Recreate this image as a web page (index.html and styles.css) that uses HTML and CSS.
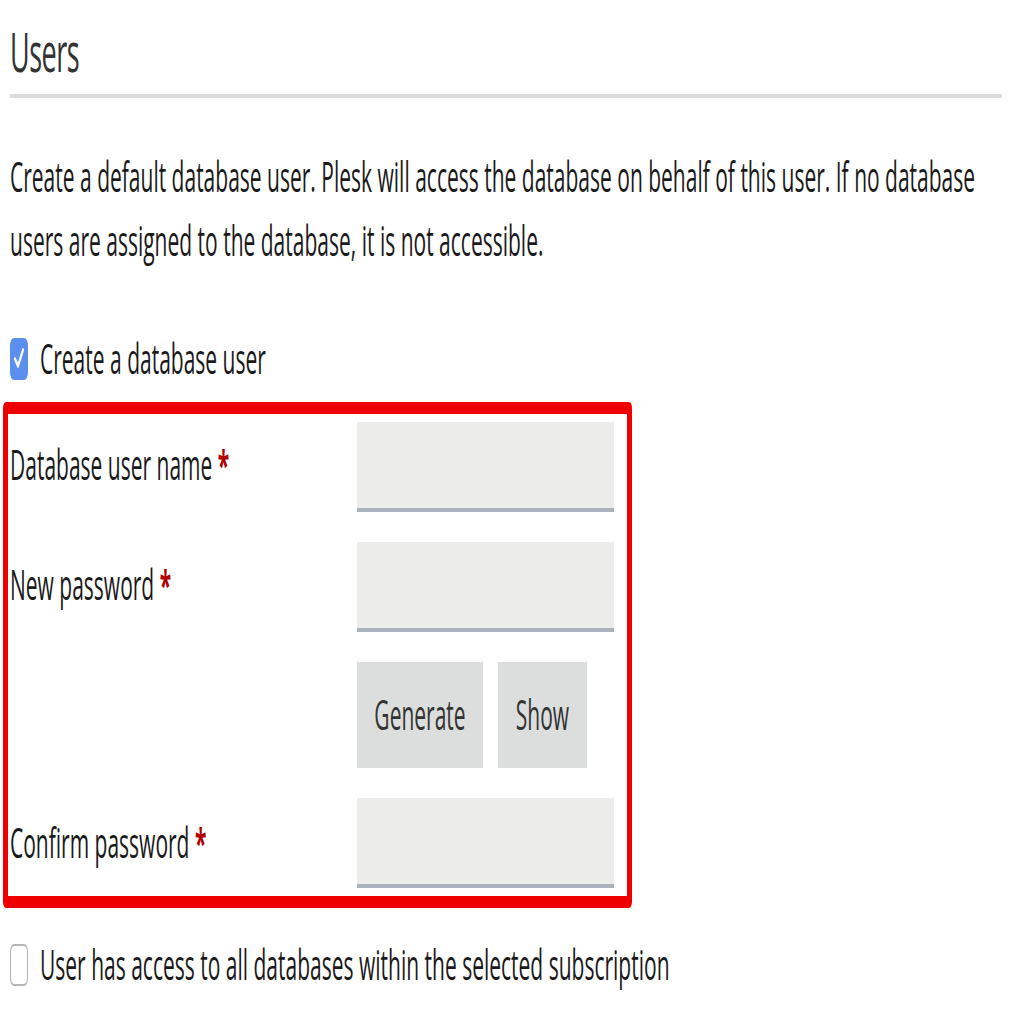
FILE: index.html
```html
<!DOCTYPE html>
<html lang="en">
<head>
<meta charset="utf-8">
<title>Users</title>
<link rel="stylesheet" href="styles.css">
</head>
<body>
<div class="page">
  <h1 class="title">Users</h1>
  <div class="rule"></div>
  <p class="desc">Create a default database user. Plesk will access the database on behalf of this user. If no database users are assigned to the database, it is not accessible.</p>
  <label class="check-row">
    <span class="box checked"><svg viewBox="0 0 18 20" width="18" height="20"><path d="M5 10.5 L8 14 L13 6" fill="none" stroke="#fff" stroke-width="2" stroke-linecap="round" stroke-linejoin="round"/></svg></span>
    <span class="check-text">Create a database user</span>
  </label>
  <div class="highlight">
    <div class="form-row">
      <span class="label">Database user name <span class="req">*</span></span>
      <span class="field"></span>
    </div>
    <div class="form-row">
      <span class="label">New password <span class="req">*</span></span>
      <span class="field"></span>
    </div>
    <div class="form-row buttons-row">
      <span class="label"></span>
      <span class="buttons"><span class="btn btn-gen">Generate</span><span class="btn btn-show">Show</span></span>
    </div>
    <div class="form-row">
      <span class="label">Confirm password <span class="req">*</span></span>
      <span class="field"></span>
    </div>
  </div>
  <label class="check-row last">
    <span class="box"></span>
    <span class="check-text">User has access to all databases within the selected subscription</span>
  </label>
</div>
</body>
</html>
```
FILE: styles.css
```css
html, body {
  margin: 0;
  padding: 0;
  background: #ffffff;
}
body {
  font-family: "Open Sans", "Noto Sans", sans-serif;
  color: #1a1a1a;
  min-height: 1024px;
}
.page {
  width: 1024px;
  height: 512px;
  box-sizing: border-box;
  padding: 0 22px 0 10px;
  transform: scale(1, 2);
  transform-origin: 0 0;
}
.title {
  margin: 0;
  padding-top: 9px;
  font-size: 27px;
  line-height: 34px;
  font-weight: 400;
  color: #333333;
  letter-spacing: -0.5px;
}
.rule {
  height: 2px;
  background: #dcdcdc;
  margin-top: 4px;
}
.desc {
  margin: 24px 0 0 0;
  font-size: 21px;
  line-height: 31.5px;
}
.check-row {
  display: flex;
  align-items: center;
  gap: 12px;
  margin-top: 28px;
  font-size: 21px;
  line-height: 31.5px;
}
.check-row.last {
  margin-top: 13px;
}
.box {
  width: 18px;
  height: 21px;
  box-sizing: border-box;
  border-radius: 4px;
  border: 1.5px solid #b5b5b5;
  background: #ffffff;
  display: flex;
}
.box.checked {
  border: none;
  background: #5a8fee;
}
.highlight {
  margin-top: 5px;
  margin-left: -7px;
  width: 629px;
  box-sizing: border-box;
  border-style: solid;
  border-color: #ee0000;
  border-width: 6px 5px;
  border-radius: 3px;
  padding: 4px 13px 4px 2px;
  display: flex;
  flex-direction: column;
  gap: 15px;
}
.form-row {
  display: grid;
  grid-template-columns: 347px 257px;
  align-items: center;
  font-size: 21px;
  line-height: 31.5px;
}
.req {
  color: #b00000;
  font-weight: 700;
}
.field {
  height: 45px;
  box-sizing: border-box;
  background: #ecedeb;
  border-bottom: 2px solid #aab3bd;
}
.buttons {
  display: flex;
  gap: 15px;
}
.btn {
  height: 53.5px;
  display: flex;
  align-items: center;
  justify-content: center;
  background: #dcdedd;
  color: #333333;
}
.btn-gen {
  width: 126px;
}
.btn-show {
  width: 89px;
}
```
